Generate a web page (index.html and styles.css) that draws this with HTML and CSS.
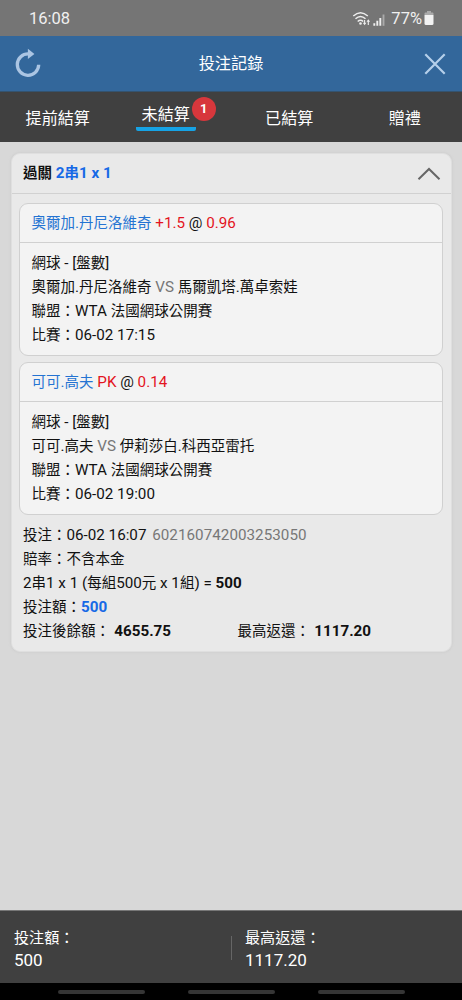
FILE: index.html
```html
<!DOCTYPE html>
<html lang="zh-Hant">
<head>
<meta charset="utf-8">
<title>投注記錄</title>
<link rel="stylesheet" href="styles.css">
</head>
<body>
<div class="app">
  <div class="status">
    <span class="clock">16:08</span>
    <svg class="signal" width="36" height="18" viewBox="0 0 36 18" fill="none" stroke="#eee" stroke-width="1.5">
      <path d="M1.300 6Q8.500 -.6 15.800 6M3.500 8.800Q8.500 4.200 13.500 8.800M5.700 11.500Q8.500 9 11.200 11.500"/>
      <circle cx="8.500" cy="13.500" r="1.300" fill="#eee" stroke="none"/>
      <path d="M12.600 10V14M16.300 15V10.500" stroke-width="1.100"/>
      <path d="M10.800 12.700L12.600 15.200L14.400 12.700ZM14.500 11.700L16.300 9.300L18.100 11.700Z" fill="#eee" stroke="none"/>
      <path d="M22.300 15.800V13.300M25.300 15.800V10.800M28.300 15.800V8" stroke-width="1.900"/>
      <path d="M31.500 15.800V4.500" stroke="#aaa" stroke-width="1.900"/>
    </svg>
    <span class="percent">77%</span>
    <svg class="battery" width="10" height="15" viewBox="0 0 10 15">
      <path d="M3 0h4v1.500h1.500q1 0 1 1V4H.5V2.500q0-1 1-1H3Z" fill="#aaa"/>
      <path d="M.5 4h9v8.500q0 1.500-1.500 1.500H2Q.5 14 .5 12.500Z" fill="#f2f2f2"/>
    </svg>
  </div>
  <header class="bar">
    <svg class="refresh" width="28" height="32" viewBox="0 0 28 32">
      <path d="M14.500 5.900A10.700 10.700 0 1 0 24.700 16.800" fill="none" stroke="#abc5e3" stroke-width="3.300"/>
      <path d="M13.900 .8L20.400 6L13.900 11Z" fill="#abc5e3"/>
    </svg>
    <h1 class="title">投注記錄</h1>
    <svg class="close" width="22" height="22" viewBox="0 0 22 22"><path d="M1.300 1.300L20.700 20.700M20.700 1.300L1.300 20.700" stroke="#b5cfea" stroke-width="2.200"/></svg>
  </header>
  <nav class="tabs">
    <span class="tab">提前結算</span>
    <span class="tab"><span class="tab-current">未結算<span class="badge">1</span></span></span>
    <span class="tab">已結算</span>
    <span class="tab">贈禮</span>
  </nav>
  <main class="content">
    <section class="card">
      <div class="card-head">
        <div class="card-title"><span class="zh">過關</span> <span class="blue">2<span class="zh">串</span>1 x 1</span></div>
        <svg width="24" height="14" viewBox="0 0 24 14"><path d="M1.500 12.300L12 2L22.500 12.300" fill="none" stroke="#666" stroke-width="2"/></svg>
      </div>
      <div class="card-body">
        <article class="bet">
          <div class="bet-head"><span class="player"><span class="zh">奧爾加</span>.<span class="zh">丹尼洛維奇</span></span> <span class="red">+1.5</span> @ <span class="red">0.96</span></div>
          <div class="bet-body">
            <div><span class="zh">網球</span> - [<span class="zh">盤數</span>]</div>
            <div><span class="zh">奧爾加</span>.<span class="zh">丹尼洛維奇</span> <span class="gray">VS</span> <span class="zh">馬爾凱塔</span>.<span class="zh">萬卓索娃</span></div>
            <div><span class="zh">聯盟：</span>WTA <span class="zh">法國網球公開賽</span></div>
            <div><span class="zh">比賽：</span>06-02 17:15</div>
          </div>
        </article>
        <article class="bet">
          <div class="bet-head"><span class="player"><span class="zh">可可</span>.<span class="zh">高夫</span></span> <span class="red">PK</span> @ <span class="red">0.14</span></div>
          <div class="bet-body">
            <div><span class="zh">網球</span> - [<span class="zh">盤數</span>]</div>
            <div><span class="zh">可可</span>.<span class="zh">高夫</span> <span class="gray">VS</span> <span class="zh">伊莉莎白</span>.<span class="zh">科西亞雷托</span></div>
            <div><span class="zh">聯盟：</span>WTA <span class="zh">法國網球公開賽</span></div>
            <div><span class="zh">比賽：</span>06-02 19:00</div>
          </div>
        </article>
        <div class="summary">
          <div><span class="zh">投注：</span>06-02 16:07 <span class="gray serial">602160742003253050</span></div>
          <div><span class="zh">賠率：不含本金</span></div>
          <div>2<span class="zh">串</span>1 x 1 (<span class="zh">每組</span>500<span class="zh">元</span> x 1<span class="zh">組</span>) = <b>500</b></div>
          <div><span class="zh">投注額：</span><b class="blue">500</b></div>
          <div class="totals">
            <div><span class="zh">投注後餘額：</span> <b>4655.75</b></div>
            <div><span class="zh">最高返還：</span> <b>1117.20</b></div>
          </div>
        </div>
      </div>
    </section>
  </main>
  <footer class="footer">
    <div class="sum"><span class="sum-label">投注額：</span><span class="sum-value">500</span></div>
    <div class="divider"></div>
    <div class="sum"><span class="sum-label">最高返還：</span><span class="sum-value">1117.20</span></div>
  </footer>
  <div class="gestures"><span class="pill"></span><span class="pill"></span><span class="pill"></span></div>
</div>
</body>
</html>
```
FILE: styles.css
```css
* { box-sizing: border-box; }
body {
  margin: 0;
  background: #d8d8d8;
  font-family: Roboto, "Noto Sans CJK TC", sans-serif;
  font-size: 15.2px;
  color: #111;
}
svg { display: block; flex: none; }
.app { height: 1000px; display: flex; flex-direction: column; overflow: hidden; }
.status {
  height: 36px;
  flex: none;
  display: flex;
  align-items: center;
  padding: 1px 28px 0 29px;
  background: #757575;
  color: #f0f0f0;
  font-size: 16.5px;
}
.clock { margin-right: auto; }
.signal { margin-right: 3px; }
.percent { margin-right: 2px; }
.bar {
  height: 56px;
  flex: none;
  display: grid;
  grid-template-columns: 28px 1fr 22px;
  align-items: center;
  padding: 0 16px 0 14px;
  background: #33679b;
  border-bottom: 1px solid #34536f;
  color: #fff;
}
.title { margin: 0; padding-right: 4px; text-align: center; font-size: 16.200px; font-weight: 400; line-height: 24px; }
.tabs {
  height: 50px;
  flex: none;
  display: grid;
  grid-template-columns: repeat(4, 1fr);
  background: #404040;
  color: #fff;
  font-size: 16.100px;
}
.tab { text-align: center; line-height: 54px; }
.tab:nth-child(n+3) { padding-left: 1px; }
.tab-current {
  display: inline-block;
  position: relative;
  width: 60px;
  height: 39px;
  line-height: 45px;
  vertical-align: top;
  border-bottom: 4px solid #16a3e5;
  border-radius: 2px;
  margin-right: 15px;
}
.badge {
  position: absolute;
  left: 56px;
  top: 5px;
  width: 24px;
  height: 24px;
  border-radius: 50%;
  background: #d7373c;
  font-size: 13px;
  font-weight: 700;
  line-height: 23px;
}
.content { flex: 1; padding: 11px 10px 0 11px; }
.card { background: #e9e9e9; border: 1px solid #dfdfdf; border-radius: 9px; box-shadow: 0 0 3px #c9c9c9; }
.card-head {
  height: 40px;
  display: flex;
  align-items: center;
  justify-content: space-between;
  padding: 0 10px 0 11px;
  border-bottom: 1px solid #d1d1d1;
}
.card-title { font-weight: 700; line-height: 24px; }
.card-body { padding: 9px 8px 8px 7px; }
.bet { height: 153px; margin-bottom: 6px; background: #f3f3f3; border: 1px solid #d0d0d0; border-radius: 9px; }
.bet-head { height: 39px; padding: 0 11.5px; line-height: 38px; border-bottom: 1px solid #d0d0d0; }
.bet-body { padding: 8px 11.5px; line-height: 24px; }
.bet-body > div { height: 24px; white-space: nowrap; }
.summary { padding: 2px 3px 0 4px; line-height: 24px; }
.summary > div { height: 24px; white-space: nowrap; }
.totals { display: grid; grid-template-columns: 1fr 1fr; }
.totals > div + div { padding-left: 6px; }
.totals b { margin-left: .5px; }
.zh { font-size: 14.500px; }
.serial { margin-left: 2px; letter-spacing: .04px; }
.player { color: #2473d2; }
.blue { color: #1769e6; }
.red { color: #e31322; }
.gray { color: #777; }
.footer {
  height: 73px;
  flex: none;
  display: grid;
  grid-template-columns: 217px 1px 1fr;
  align-items: center;
  padding: 4px 14px 0;
  background: #404040;
  border-top: 1px solid #777;
  color: #fff;
}
.sum { display: flex; flex-direction: column; line-height: 23px; }
.divider + .sum { padding-left: 13px; }
.sum-label { padding-top: 1px; margin-bottom: -1px; font-size: 15.100px; }
.sum-value { font-size: 17px; }
.divider { height: 24px; margin-bottom: 3px; background: #666; }
.gestures {
  height: 17px;
  flex: none;
  display: flex;
  justify-content: center;
  align-items: center;
  gap: 43px;
  background: #000;
}
.pill { width: 87px; height: 4px; border-radius: 2px; background: #353535; }
```
